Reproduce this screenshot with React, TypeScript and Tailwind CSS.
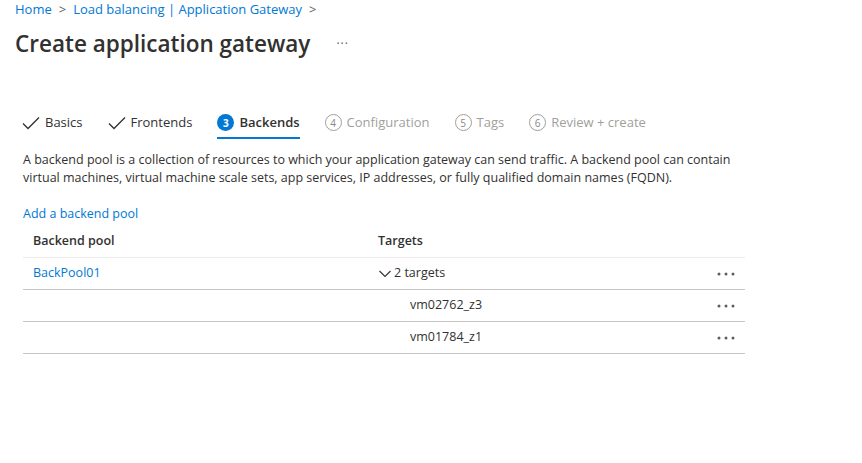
import React from "react"

const font = { fontFamily: '"Segoe UI", "Open Sans", "Noto Sans", sans-serif' }

function Check() {
  return (
    <svg width="18" height="14" viewBox="0 0 18 14" fill="none">
      <path d="M1 7.5 L6 12.5 L17 1.5" stroke="#323130" strokeWidth="1.3" />
    </svg>
  )
}

function StepCircle({ n, active }: { n: number; active?: boolean }) {
  if (active) {
    return (
      <span className="flex h-[17px] w-[17px] items-center justify-center rounded-full bg-[#0078d4] text-[10px] font-bold leading-none text-white">
        {n}
      </span>
    )
  }
  return (
    <span className="flex h-[17px] w-[17px] items-center justify-center rounded-full border border-[#a19f9d] text-[10px] leading-none text-[#8a8886]">
      {n}
    </span>
  )
}

function Dots() {
  return (
    <svg width="18" height="4" viewBox="0 0 18 4">
      <circle cx="2" cy="2" r="1.5" fill="#605e5c" />
      <circle cx="9" cy="2" r="1.5" fill="#605e5c" />
      <circle cx="16" cy="2" r="1.5" fill="#605e5c" />
    </svg>
  )
}

function Chevron() {
  return (
    <svg width="12" height="8" viewBox="0 0 12 8" fill="none">
      <path d="M0.5 1 L6 6.5 L11.5 1" stroke="#323130" strokeWidth="1.1" />
    </svg>
  )
}

const tabs = [
  { label: "Basics", done: true },
  { label: "Frontends", done: true },
  { label: "Backends", n: 3, active: true },
  { label: "Configuration", n: 4 },
  { label: "Tags", n: 5 },
  { label: "Review + create", n: 6 },
]

export default function App() {
  return (
    <div className="min-h-[463px] w-full bg-white text-[12.5px] text-[#323130]" style={font}>
      {/* Breadcrumb */}
      <div className="flex h-[18px] items-center gap-[7px] px-[15px] text-[13px] leading-[18px] text-[#0078d4]">
        <span>Home</span>
        <span className="text-[#605e5c]">&gt;</span>
        <span>Load balancing | Application Gateway</span>
        <span className="text-[#605e5c]">&gt;</span>
      </div>

      {/* Title */}
      <div className="mt-[10px] flex h-[32px] items-center px-[15px]">
        <h1 className="text-[22.5px] font-semibold leading-[32px]">Create application gateway</h1>
        <span className="ml-[26px] text-[12px] tracking-[1px] text-[#605e5c]">···</span>
      </div>

      {/* Tabs */}
      <div className="mt-[48px] flex gap-[25px] px-[22px]">
        {tabs.map((t) => (
          <div
            key={t.label}
            className={
              "flex h-[31px] items-center gap-[5px] border-b-2 " +
              (t.active ? "border-[#0078d4]" : "border-transparent")
            }
          >
            {t.done ? <Check /> : <StepCircle n={t.n!} active={t.active} />}
            <span
              className={
                "text-[13px] " +
                (t.done ? "text-[#323130]" : t.active ? "font-semibold text-[#323130]" : "text-[#a19f9d]")
              }
            >
              {t.label}
            </span>
          </div>
        ))}
      </div>

      {/* Description */}
      <div className="mt-[12px] px-[23px] leading-[18px]">
        <p>
          A backend pool is a collection of resources to which your application gateway can send traffic. A backend pool can contain
          <br />
          virtual machines, virtual machine scale sets, app services, IP addresses, or fully qualified domain names (FQDN).
        </p>
        <div className="mt-[18px] text-[#0078d4]">Add a backend pool</div>
      </div>

      {/* Table */}
      <div className="mt-[3px] w-[722px] ml-[23px]">
        <div className="flex h-[32px] items-center border-b border-[#edebe9] font-semibold">
          <div className="w-[355px] pl-[10px]">Backend pool</div>
          <div className="flex-1">Targets</div>
        </div>
        <div className="flex h-[32px] items-center border-b border-[#c8c6c4]">
          <div className="w-[355px] pl-[10px] text-[#0078d4]">BackPool01</div>
          <div className="flex flex-1 items-center gap-[3px] pl-[1px]">
            <Chevron />
            <span>2 targets</span>
          </div>
          <div className="pr-[10px]">
            <Dots />
          </div>
        </div>
        {["vm02762_z3", "vm01784_z1"].map((vm) => (
          <div key={vm} className="flex h-[32px] items-center border-b border-[#c8c6c4]">
            <div className="w-[355px]" />
            <div className="flex-1 pl-[32px]">{vm}</div>
            <div className="pr-[10px]">
              <Dots />
            </div>
          </div>
        ))}
      </div>
    </div>
  )
}
